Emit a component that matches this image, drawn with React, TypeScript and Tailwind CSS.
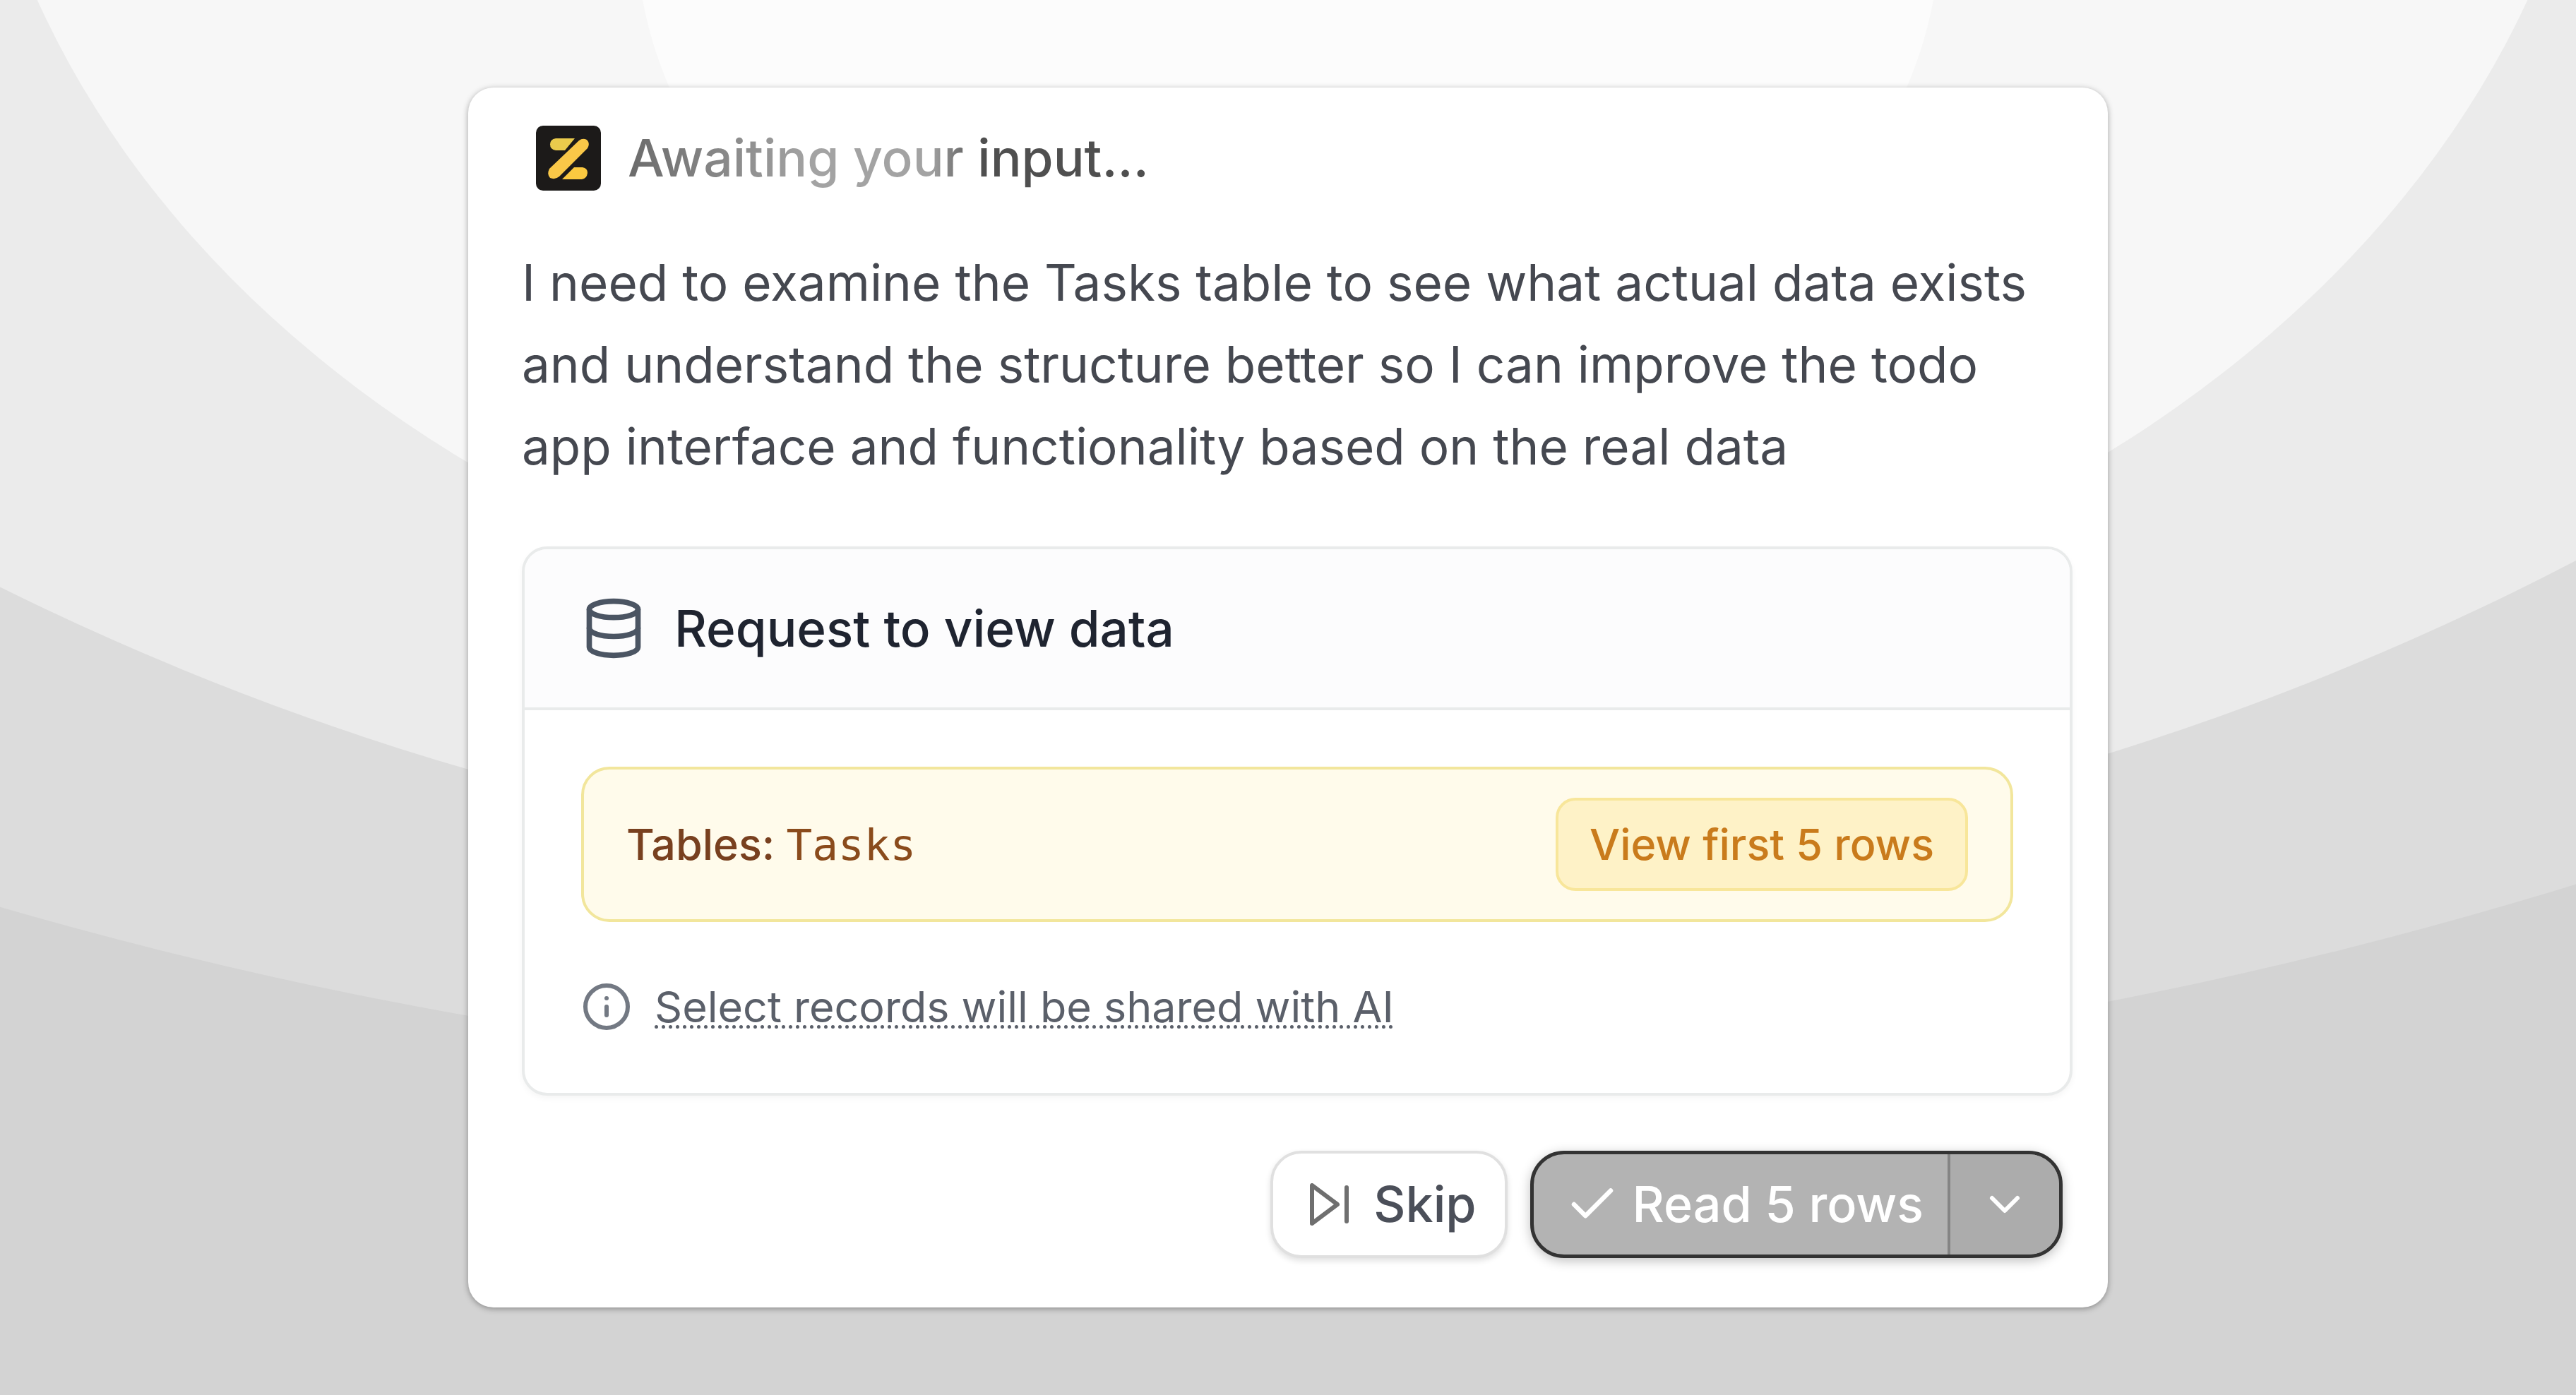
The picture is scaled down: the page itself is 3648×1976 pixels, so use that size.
import { Check, ChevronDown, Database, Info } from 'lucide-react'

function Backdrop() {
    return (
        <svg className="absolute inset-0 h-full w-full" viewBox="0 0 3648 1976" preserveAspectRatio="xMidYMid slice" aria-hidden="true">
            <rect width="3648" height="1976" fill="#d3d3d3" />
            <circle cx="1770" cy="-4824" r="6360" fill="#dcdcdc" />
            <circle cx="1787" cy="-2775" r="4025" fill="#ebebeb" />
            <ellipse cx="1819" cy="-472" rx="1868" ry="1430" fill="#f7f7f7" transform="rotate(-0.5 1819 -472)" />
            <ellipse cx="1824" cy="-99" rx="923" ry="708" fill="#fcfcfc" />
        </svg>
    )
}

function Logo() {
    return (
        <svg className="size-[92px]" viewBox="0 0 92 92" aria-hidden="true">
            <rect width="92" height="92" rx="10" fill="#1c1a19" />
            <path d="M28 18H55L41 35H28Q20 34 20 26.500Q20 19 28 18Z" fill="#eacb4c" />
            <path d="M61 21Q66 17 72 20Q77 25 73 32L33 72Q27 77 20 74Q15 69 19 61Z" fill="#fac848" />
            <path d="M54 59H66Q73 60 73 67Q72 75 65 76H37Z" fill="#fbc940" />
        </svg>
    )
}

function SkipIcon() {
    return (
        <svg className="h-[60px] w-[56px]" viewBox="0 0 56 60" fill="none" stroke="#6f6f6f" strokeWidth="6" strokeLinejoin="round" strokeLinecap="round" aria-hidden="true">
            <path d="M3 3V57L39 30Z" />
            <path d="M52 6V54" />
        </svg>
    )
}

function App() {
    return (
        <main className="relative flex min-h-screen items-center justify-center font-['Inter',sans-serif]">
            <Backdrop />

            <section className="relative w-full max-w-[2322px] rounded-[36px] bg-white pt-[50px] pr-[50px] pb-[70px] pl-[76px] shadow-[0_2px_8px_rgba(0,0,0,0.35)]">
                <header className="flex items-center gap-[38px] pl-[20px]">
                    <Logo />
                    <h1 className="bg-[linear-gradient(90deg,#6b6b6b,#a3a3a3_35%,#a3a3a3_58%,#4f4f4f_68%)] bg-clip-text text-[73px] leading-[100px] font-medium text-transparent">
                        Awaiting your input...
                    </h1>
                </header>

                <p className="mt-[68px] max-w-[2160px] text-[71px] leading-[116px] text-[#454850]">
                    I need to examine the Tasks table to see what actual data exists and understand the structure better so I can improve the todo app interface and functionality based on the real data
                </p>

                <div className="mt-[84px] rounded-[36px] border-4 border-[#e9ebeb] bg-white shadow-[0_4px_8px_rgba(0,0,0,0.04)]">
                    <div className="flex items-center gap-[40px] rounded-t-[32px] border-b-4 border-[#e9ebeb] bg-[#fcfcfd] px-[80px] py-[64px]">
                        <Database className="size-[92px] text-[#4b5563]" strokeWidth={2} />
                        <h2 className="text-[71px] leading-[96px] font-medium text-[#1f2430]">Request to view data</h2>
                    </div>

                    <div className="px-[80px] pt-[80px] pb-[86px]">
                        <div className="flex items-center justify-between rounded-[40px] border-4 border-[#f2e69c] bg-[#fffbeb] px-[60px] py-[40px]">
                            <p className="text-[61px] leading-[84px] font-medium text-[#78401f]">
                                Tables: <span className="font-['DejaVu_Sans_Mono',monospace] font-normal text-[#8a4b1c]">Tasks</span>
                            </p>
                            <button className="rounded-[28px] border-4 border-[#f8e69a] bg-[#fef2c7] px-[44px] py-[20px] text-[61px] leading-[84px] font-medium text-[#c97b1c]">
                                View first 5 rows
                            </button>
                        </div>

                        <div className="mt-[84px] flex items-center gap-[32px]">
                            <Info className="size-[72px] text-[#737983]" strokeWidth={2} />
                            <a href="#" className="text-[61px] leading-[72px] text-[#5b606a] underline decoration-dotted decoration-[5px] underline-offset-[4px]">
                                Select records will be shared with AI
                            </a>
                        </div>
                    </div>
                </div>

                <div className="mt-[78px] flex justify-end gap-[32px] pr-[14px]">
                    <button className="flex items-center gap-[34px] rounded-[44px] border-4 border-[#e0e0e0] bg-white py-[24px] pr-[40px] pl-[52px] text-[70px] leading-[96px] font-medium text-[#4b4f59] shadow-[0_4px_8px_rgba(0,0,0,0.12)]">
                        <SkipIcon />
                        Skip
                    </button>
                    <div className="flex overflow-hidden rounded-[48px] border-5 border-[#333333] bg-[#b3b3b3] text-white shadow-[0_4px_16px_rgba(0,0,0,0.25)]">
                        <button className="flex items-center gap-[18px] pr-[34px] pl-[44px] text-[70px] leading-[96px] font-medium">
                            <Check className="size-[78px]" strokeWidth={2} />
                            Read 5 rows
                        </button>
                        <button className="flex items-center border-l-4 border-[#848484] bg-[#acacac] px-[41px]" aria-label="More options">
                            <ChevronDown className="size-[72px]" strokeWidth={2} />
                        </button>
                    </div>
                </div>
            </section>
        </main>
    )
}

export default App
